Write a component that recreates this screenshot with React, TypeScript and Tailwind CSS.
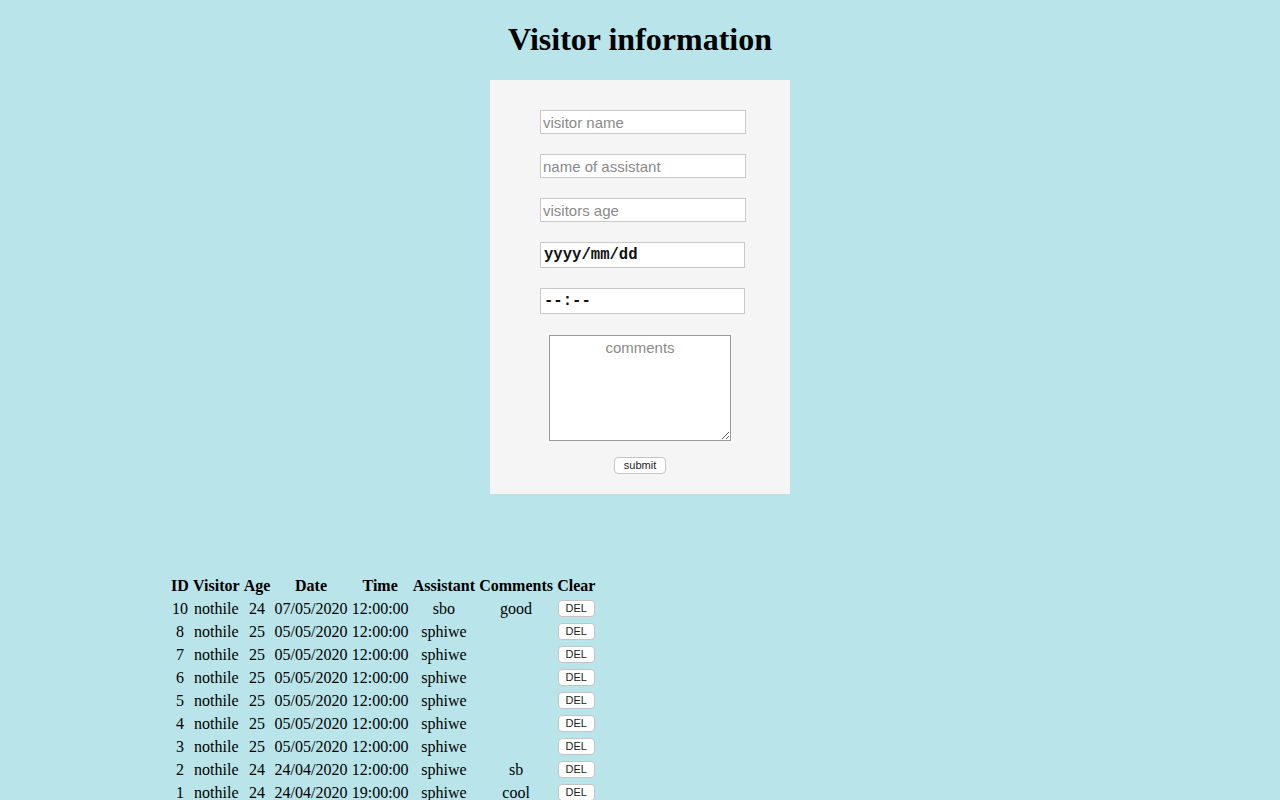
const rows = [
  { id: 10, visitor: "nothile", age: 24, date: "07/05/2020", time: "12:00:00", assistant: "sbo", comments: "good" },
  { id: 8, visitor: "nothile", age: 25, date: "05/05/2020", time: "12:00:00", assistant: "sphiwe", comments: "" },
  { id: 7, visitor: "nothile", age: 25, date: "05/05/2020", time: "12:00:00", assistant: "sphiwe", comments: "" },
  { id: 6, visitor: "nothile", age: 25, date: "05/05/2020", time: "12:00:00", assistant: "sphiwe", comments: "" },
  { id: 5, visitor: "nothile", age: 25, date: "05/05/2020", time: "12:00:00", assistant: "sphiwe", comments: "" },
  { id: 4, visitor: "nothile", age: 25, date: "05/05/2020", time: "12:00:00", assistant: "sphiwe", comments: "" },
  { id: 3, visitor: "nothile", age: 25, date: "05/05/2020", time: "12:00:00", assistant: "sphiwe", comments: "" },
  { id: 2, visitor: "nothile", age: 24, date: "24/04/2020", time: "12:00:00", assistant: "sphiwe", comments: "sb" },
  { id: 1, visitor: "nothile", age: 24, date: "24/04/2020", time: "19:00:00", assistant: "sphiwe", comments: "cool" },
];

const textInput =
  "block h-[24px] w-[206px] border border-[#c9c9c9] bg-white px-[2px] text-[15px] text-black outline-none placeholder:text-[#8a8a8a] [font-family:'Liberation_Sans',Arial,sans-serif]";

const monoInput =
  "block h-[26px] w-[205px] border border-[#c9c9c9] bg-white px-[3px] text-[15.6px] font-bold text-black outline-none placeholder:text-[#111] [font-family:'Liberation_Mono','Courier_New',monospace]";

function SmallButton({ label, className }: { label: string; className?: string }) {
  return (
    <button
      className={
        "flex items-center justify-center rounded-[4px] border border-[#c4c4c4] bg-white text-[11px] leading-none text-[#222] [font-family:'Liberation_Sans',Arial,sans-serif] " +
        (className ?? "")
      }
    >
      {label}
    </button>
  );
}

export default function App() {
  return (
    <div className="min-h-screen bg-[#b9e4e9] pb-10 text-black [font-family:'Liberation_Serif','Times_New_Roman',serif]">
      <h1 className="pt-[21px] text-center text-[32px] font-bold leading-[37px]">Visitor information</h1>

      <div className="mx-auto mt-[22px] flex h-[414px] w-[300px] flex-col bg-[#f5f5f5] pt-[30px]">
        <div className="flex flex-col gap-[20px] pl-[50px]">
          <input className={textInput} placeholder="visitor name" />
          <input className={textInput} placeholder="name of assistant" />
          <input className={textInput} placeholder="visitors age" />
          <input className={monoInput} placeholder="yyyy/mm/dd" />
          <input className={monoInput} placeholder="--:--" />
        </div>
        <textarea
          className="mx-auto mt-[21px] block h-[106px] w-[182px] resize border border-[#9a9a9a] bg-white px-[2px] pt-[3px] text-center text-[15px] leading-[18px] outline-none placeholder:text-[#8a8a8a] [font-family:'Liberation_Sans',Arial,sans-serif]"
          placeholder="comments"
        />
        <SmallButton label="submit" className="mx-auto mt-[16px] h-[17px] w-[52px]" />
      </div>

      <table className="ml-[168px] mt-[80px] border-separate border-spacing-[2px] text-[16px]">
        <thead>
          <tr className="h-[20px] leading-[18px]">
            {["ID", "Visitor", "Age", "Date", "Time", "Assistant", "Comments", "Clear"].map((h) => (
              <th key={h} className="px-[1.1px] py-px text-center font-bold">
                {h}
              </th>
            ))}
          </tr>
        </thead>
        <tbody>
          {rows.map((r) => (
            <tr key={r.id} className="h-[21px] leading-[18px]">
              <td className="px-[1.1px] py-px text-center">{r.id}</td>
              <td className="px-[1.1px] py-px text-center">{r.visitor}</td>
              <td className="px-[1.1px] py-px text-center">{r.age}</td>
              <td className="px-[1.1px] py-px text-center">{r.date}</td>
              <td className="px-[1.1px] py-px text-center">{r.time}</td>
              <td className="px-[1.1px] py-px text-center">{r.assistant}</td>
              <td className="px-[1.1px] py-px text-center">{r.comments}</td>
              <td className="px-[1.1px] py-px text-center">
                <SmallButton label="DEL" className="mx-auto h-[17px] w-[37px]" />
              </td>
            </tr>
          ))}
        </tbody>
      </table>
    </div>
  );
}
